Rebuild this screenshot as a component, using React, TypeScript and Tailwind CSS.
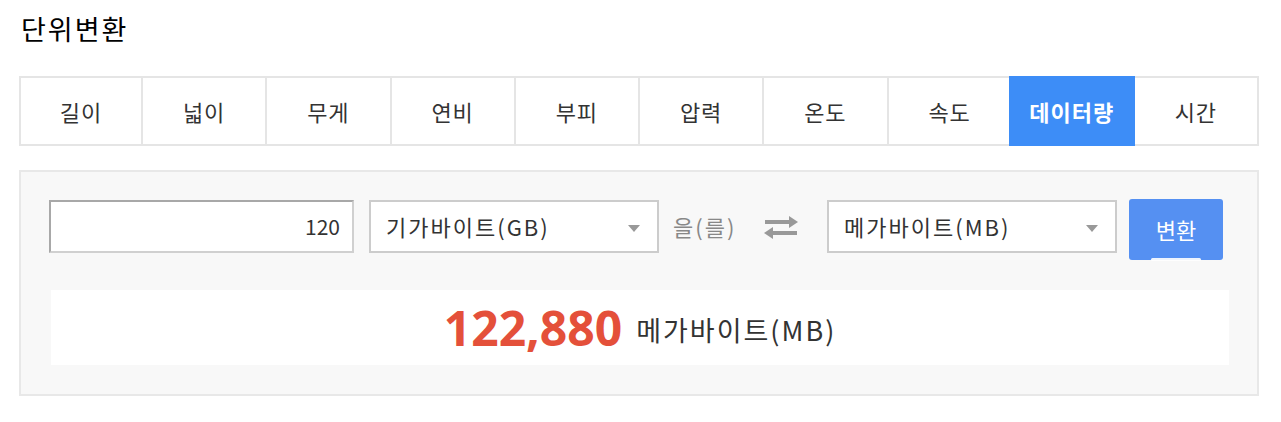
import React from "react";

const tabs = ["길이", "넓이", "무게", "연비", "부피", "압력", "온도", "속도", "데이터량", "시간"];
const ko = { fontFamily: '"Noto Sans CJK KR", "Noto Sans", sans-serif' };

function Dropdown({ label }: { label: string }) {
  return (
    <div className="relative flex h-[53px] w-[290px] items-center border-2 border-[#cccccc] bg-white pl-[15px] text-[22px] tracking-[2px] text-[#333]">
      {label}
      <span className="absolute right-[17px] top-[23px] h-0 w-0 border-x-[6px] border-t-[7px] border-x-transparent border-t-[#999]" />
    </div>
  );
}

export default function App() {
  return (
    <div className="min-h-screen bg-white pl-[19px] pt-[9px]" style={ko}>
      <h1 className="pl-[2px] text-[27px] font-normal leading-[40px] tracking-[2px] text-black">단위변환</h1>

      {/* tabs */}
      <ul className="mt-[27px] flex h-[70px] w-[1240px] border-2 border-[#e5e5e5] bg-white">
        {tabs.map((t, i) => {
          const active = t === "데이터량";
          return (
            <li
              key={t}
              className={
                active
                  ? "relative z-10 -my-[2px] -ml-[2px] -mr-[2px] flex w-[126px] items-center justify-center bg-[#3d8df7] text-[22px] font-bold tracking-[1px] text-white"
                  : i === 0
                  ? "flex w-[120px] items-center justify-center text-[22px] tracking-[1px] text-[#333]"
                  : "flex flex-1 items-center justify-center border-l-2 border-[#e5e5e5] text-[22px] tracking-[1px] text-[#333]"
              }
            >
              {t}
            </li>
          );
        })}
      </ul>

      {/* converter panel */}
      <div className="mt-[24px] w-[1240px] border-2 border-[#e8e8e8] bg-[#f8f8f8] pb-[29px] pl-[28px] pr-[27px] pt-[28px]">
        <div className="flex items-start">
          <div className="flex h-[53px] w-[305px] items-center justify-end border-2 border-b-[#d0d0d0] border-l-[#a8a8a8] border-r-[#d0d0d0] border-t-[#a8a8a8] bg-white pr-[12px] text-[21px] text-[#333]">
            120
          </div>
          <div className="ml-[15px]">
            <Dropdown label="기가바이트(GB)" />
          </div>
          <div className="flex h-[53px] w-[168px] items-center">
            <span className="ml-[14px] w-[91px] text-[22px] tracking-[2px] text-[#888]">을(를)</span>
            <svg width="34" height="26" viewBox="0 0 34 26" className="text-[#999]">
              <path d="M1 8h27M6 19h27" stroke="currentColor" strokeWidth="4" />
              <path d="M25 2l9 6-9 6z" fill="currentColor" />
              <path d="M9 13l-9 6 9 6z" fill="currentColor" />
            </svg>
          </div>
          <Dropdown label="메가바이트(MB)" />
          <button className="relative -mt-[1px] ml-[12px] h-[61px] w-[94px] rounded-[3px] bg-[#5590f2] text-[22px] text-white" style={ko}>
            변환
            <span className="absolute bottom-[-1px] left-[22px] h-[3px] w-[50px] rounded-sm bg-white/90" />
          </button>
        </div>

        <div className="ml-[2px] mt-[30px] flex h-[75px] w-[1178px] items-center justify-center gap-[14px] bg-white">
          <span className="text-[48px] font-bold leading-none text-[#e4503a]" style={{ fontFamily: '"Noto Sans", sans-serif' }}>
            122,880
          </span>
          <span className="mt-[6px] text-[27px] tracking-[2px] text-[#333]">메가바이트(MB)</span>
        </div>
      </div>
    </div>
  );
}
